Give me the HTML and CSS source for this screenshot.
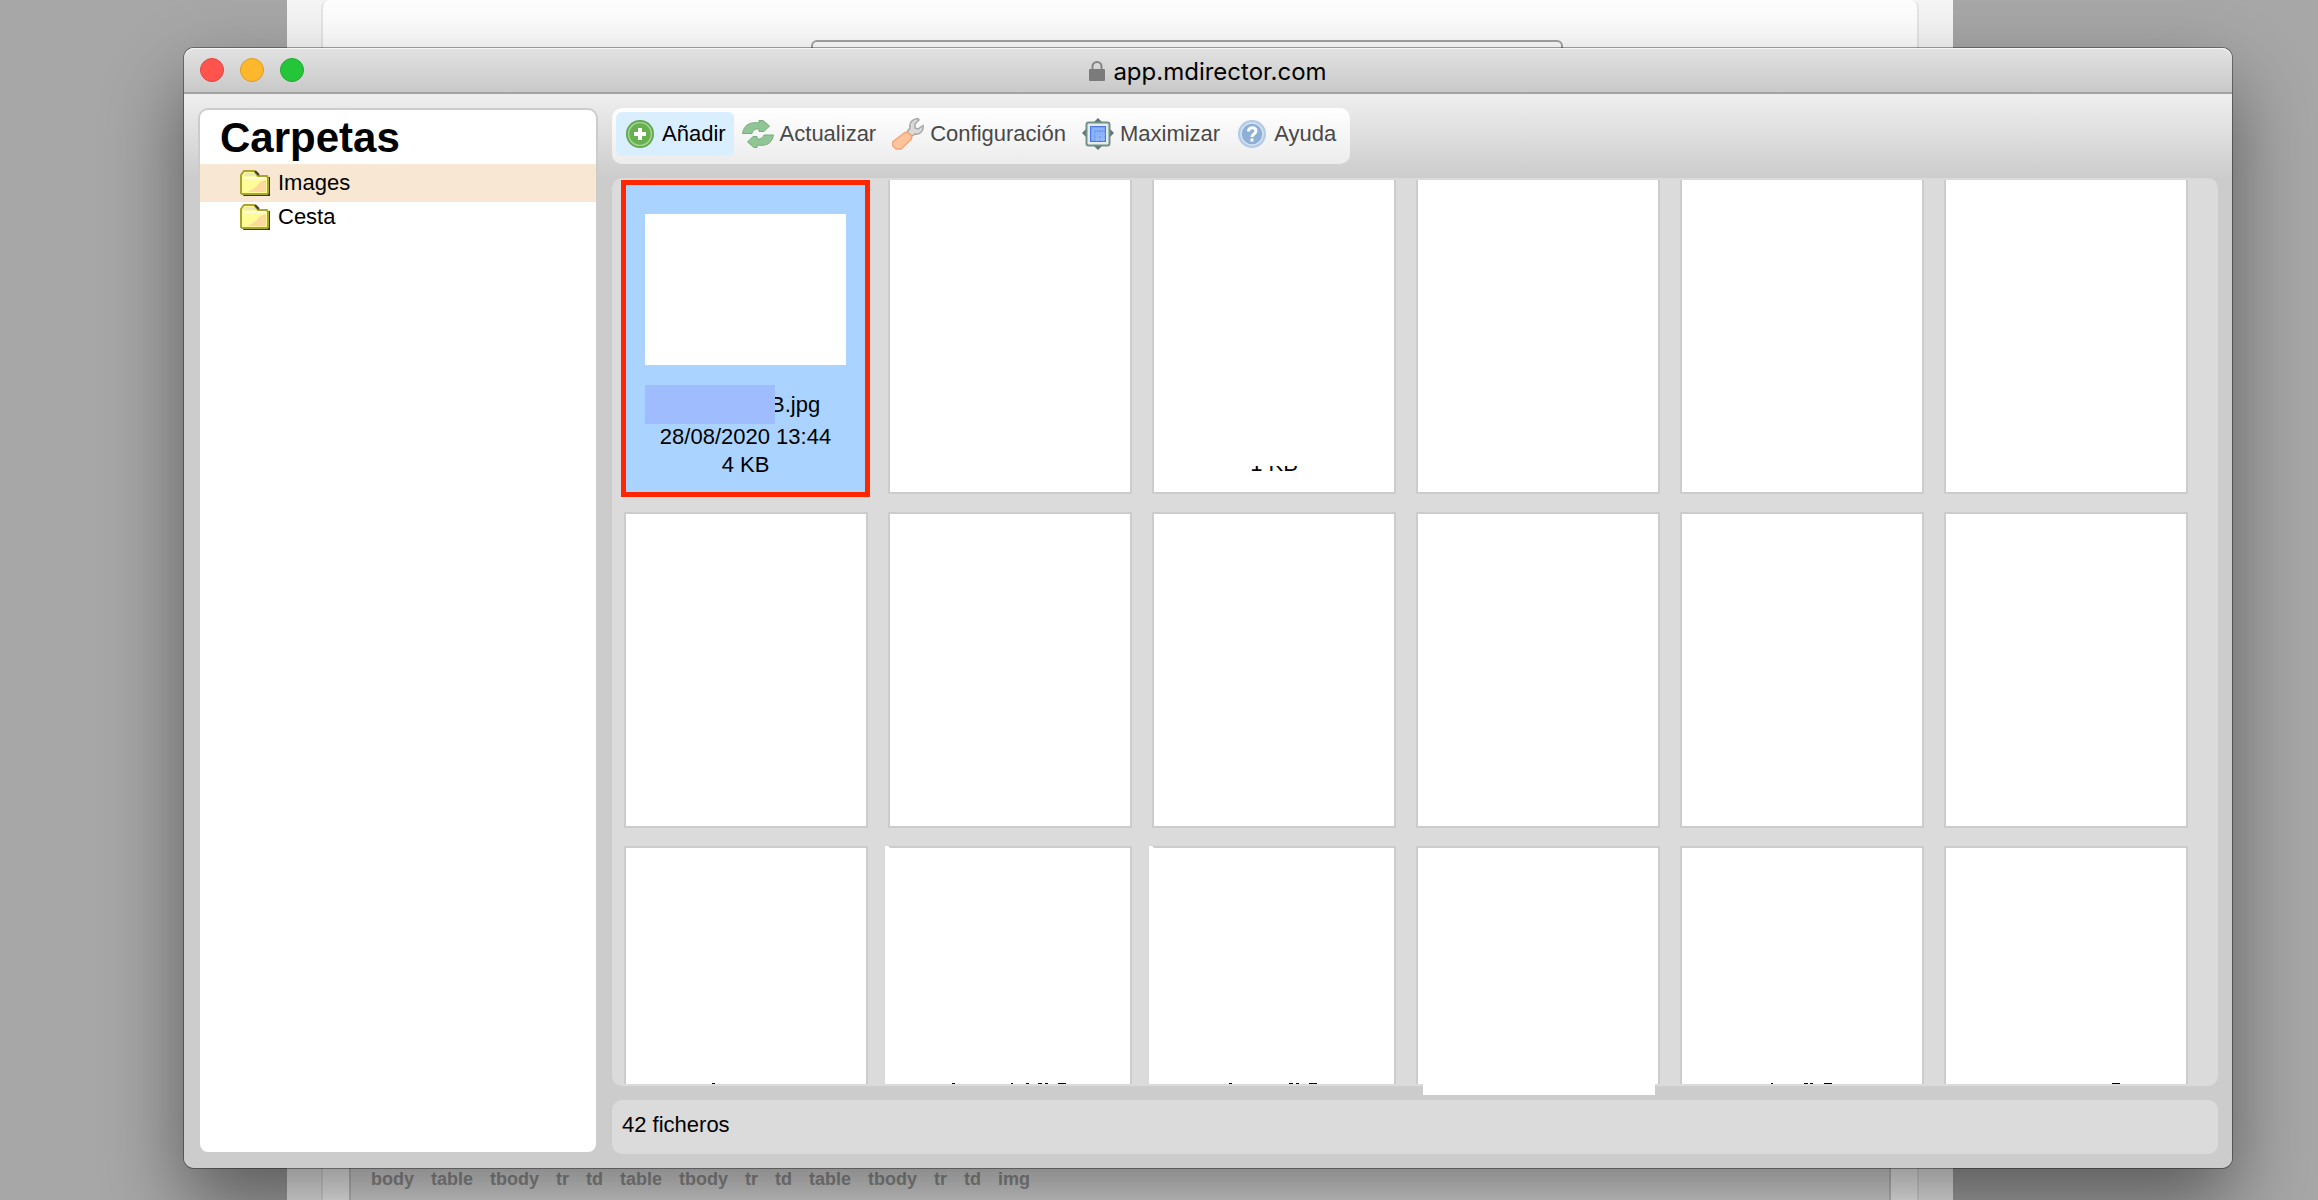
FILE: index.html
```
<!DOCTYPE html>
<html lang="es">
<head>
    <meta charset="UTF-8">
    <meta name="viewport" content="width=device-width, initial-scale=1.0">
    <title>app.mdirector.com</title>
    <link rel="stylesheet" href="styles.css">
</head>
<body>
<div class="desktop">

    <!-- editor behind the window -->
    <div class="page">
        <div class="card">
            <input type="text" class="field" aria-label="Asunto">
            <nav class="path">
                <a href="#">body</a>
                <a href="#">table</a>
                <a href="#">tbody</a>
                <a href="#">tr</a>
                <a href="#">td</a>
                <a href="#">table</a>
                <a href="#">tbody</a>
                <a href="#">tr</a>
                <a href="#">td</a>
                <a href="#">table</a>
                <a href="#">tbody</a>
                <a href="#">tr</a>
                <a href="#">td</a>
                <a href="#">img</a>
            </nav>
        </div>
    </div>

    <div class="window">
        <div class="titlebar">
            <div class="lights">
                <button class="light red" aria-label="Cerrar"></button>
                <button class="light yellow" aria-label="Minimizar"></button>
                <button class="light green" aria-label="Ampliar"></button>
            </div>
            <div class="title">
                <svg width="16" height="20" viewBox="0 0 16 20">
                    <path d="M3.5 9V5.500a4.500 4.500 0 0 1 9 0V9" fill="none" stroke="#858585" stroke-width="2"/>
                    <rect y="8" width="16" height="12" rx="1" fill="#7b7b7b"/>
                </svg>
                <span>app.mdirector.com</span>
            </div>
        </div>

        <div class="content">
            <div class="sidebar">
                <h1>Carpetas</h1>
                <ul class="tree">
                    <li class="current">
                        <svg width="30" height="26" viewBox="0 0 30 26"><use href="#folder"/></svg>
                        <a href="#">Images</a>
                    </li>
                    <li>
                        <svg width="30" height="26" viewBox="0 0 30 26"><use href="#folder"/></svg>
                        <a href="#">Cesta</a>
                    </li>
                </ul>
            </div>

            <div class="main">
                <div class="toolbar">
                    <button class="active">
                        <svg width="32" height="32" viewBox="0 0 32 32">
                            <circle cx="16" cy="16" r="14" fill="#5fa64c"/>
                            <circle cx="16" cy="16" r="11.500" fill="#67b04f" stroke="#a5d492" stroke-width="1.500"/>
                            <path d="M16 10v12M10 16h12" stroke="#fff" stroke-width="4"/>
                        </svg>
                        Añadir
                    </button>
                    <button>
                        <svg width="32" height="32" viewBox="0 0 32 32" fill="#92c596" stroke="#75ad7b">
                            <path d="M.5 15.500C2 7 8 3.500 17 5V2.500h4L27.500 8 22 13.500H17V11c-4-.5-6 1-7 4.500z"/>
                            <path d="M31.500 17C30 25.500 24 28.500 15 27v2.500h-3L5.500 24 11 18.500h4V21c4 .5 6-1 7-4z"/>
                        </svg>
                        Actualizar
                    </button>
                    <button>
                        <svg width="32" height="32" viewBox="0 0 32 32">
                            <path d="M15 14L18 10C17 5 20 1 26 .5L27 2 23 6v4l3 1 5-3.500c1 5-3 9.500-8 8.500L20 18z" fill="#d9d9d9" stroke="#a8a8a8" stroke-width="1.500"/>
                            <path d="M13 14.500h3l3.500 3.500v3L9 31H4L.5 27.500V24z" fill="#ffc49c" stroke="#f3a677" stroke-width="1.500"/>
                        </svg>
                        Configuración
                    </button>
                    <button>
                        <svg width="32" height="32" viewBox="0 0 32 32">
                            <path d="M16 0l4 4h-8zM16 32l4-4h-8zM0 15l4-4v8zM32 15l-4-4v8z" fill="#5d7974"/>
                            <rect x="4.500" y="4.500" width="23" height="23" rx="2" fill="#e6eceb" stroke="#71908a" stroke-width="2"/>
                            <rect x="8.500" y="8.500" width="15" height="15" fill="#78a4f5" stroke="#4a7ae8"/>
                            <path d="M11 22V11h11M14 15h3v3h-3zM19 15h3v3h-3zM14 20h3v2h-3zM19 20h3v2h-3z" fill="none" stroke="#a5c3fa"/>
                        </svg>
                        Maximizar
                    </button>
                    <button>
                        <svg width="32" height="32" viewBox="0 0 32 32">
                            <circle cx="16" cy="16" r="14" fill="#b3cbe6"/>
                            <circle cx="16" cy="16" r="11" fill="#8eafd8" stroke="#d5e3f3" stroke-width="1.500"/>
                            <path d="M12.500 13.500c0-5 7.500-5 7.500-.5 0 3-4 3-4 6M16 20.500v3" fill="none" stroke="#fff" stroke-width="3"/>
                        </svg>
                        Ayuda
                    </button>
                </div>

                <div class="files">
                    <div class="grid">
                        <div class="tile selected">
                            <div class="preview"></div>
                            <div class="name"><span class="cover"></span><span class="text">B.jpg</span></div>
                            <div class="info">28/08/2020 13:44</div>
                            <div class="info">4 KB</div>
                        </div>
                        <div class="tile"></div>
                        <div class="tile last-line">
                            <div class="info cut">1 KB</div>
                        </div>
                        <div class="tile"></div>
                        <div class="tile"></div>
                        <div class="tile"></div>

                        <div class="tile"></div>
                        <div class="tile"></div>
                        <div class="tile"></div>
                        <div class="tile"></div>
                        <div class="tile"></div>
                        <div class="tile"></div>

                        <!-- only the tops of the names show at the lower edge -->
                        <div class="tile">
                            <svg class="tops" viewBox="0 0 240 1"><path d="M86 0h3v1h-3z"/></svg>
                        </div>
                        <div class="tile wide">
                            <svg class="tops" viewBox="0 0 240 1"><path d="M62 0h3v1h-3zM121 0h2v1h-2zM136 0h3v1h-3zM148 0h4v1h-4zM155 0h3v1h-3zM168 0h8v1h-8z"/></svg>
                        </div>
                        <div class="tile wide">
                            <svg class="tops" viewBox="0 0 240 1"><path d="M75 0h3v1h-3zM135 0h4v1h-4zM142 0h3v1h-3zM155 0h8v1h-8z"/></svg>
                        </div>
                        <div class="tile"></div>
                        <div class="tile">
                            <svg class="tops" viewBox="0 0 240 1"><path d="M89 0h2v1h-2zM122 0h4v1h-4zM128 0h3v1h-3zM142 0h8v1h-8z"/></svg>
                        </div>
                        <div class="tile">
                            <svg class="tops" viewBox="0 0 240 1"><path d="M166 0h8v1h-8z"/></svg>
                        </div>
                    </div>
                    <div class="patch"></div>
                </div>

                <div class="status">42 ficheros</div>
            </div>
        </div>
    </div>
</div>

<svg width="0" height="0" class="defs">
    <symbol id="folder" viewBox="0 0 30 26">
        <path d="M4 24h24V7h2v19H3z" fill="#3a3a2a"/>
        <path d="M1 23V5l3-4h10l4 5h9l1 2v15l-1 1H2z" fill="#fffb96" stroke="#a9a42c" stroke-width="2"/>
        <path d="M5 3h9l2 3H4z" fill="#e9e6c0"/>
        <path d="M15 1l4 4" stroke="#3a3a2a" stroke-width="2"/>
        <path d="M3 8h23" stroke="#fffde0" stroke-width="2"/>
        <path d="M26 10v12H8l8-5 4-5z" fill="#fdd9a0"/>
    </symbol>
</svg>
</body>
</html>
```
FILE: styles.css
```
*{
    box-sizing: border-box;
}
body{
    margin: 0;
    font-family: "Liberation Sans", Arial, sans-serif;
    font-size: 22px;
    color: #000;
}
a{
    color: inherit;
    text-decoration: none;
}
button{
    border: 0;
    padding: 0;
    background: none;
    font: inherit;
    color: inherit;
}
.defs{
    display: none;
}
.desktop{
    display: grid;
    grid-template-columns: minmax(0, 1fr);
    grid-template-rows: minmax(0, 1fr);
    height: 100vh;
    overflow: hidden;
    background: #a7a7a7;
}

/* editor page */
.page{
    grid-area: 1 / 1;
    margin: 0 365px 0 287px;
    padding: 0 34px;
    background: #f5f5f5;
}
.card{
    display: flex;
    flex-direction: column;
    justify-content: space-between;
    height: 100%;
    padding: 0 26px;
    border: 2px solid #e6e6e6;
    border-width: 0 2px;
    border-radius: 8px 8px 0 0;
    background: #fefefe;
}
.field{
    width: 752px;
    height: 44px;
    margin: 40px 0 0 462px;
    border: 2px solid #a5a5a5;
    border-radius: 6px;
    background: #fff;
}
.path{
    display: flex;
    gap: 17px;
    height: 40px;
    padding: 0 20px;
    border: 2px solid #c9c9c9;
    border-width: 0 2px;
    background: #e3e3e3;
    color: #979797;
    font-size: 18px;
    font-weight: bold;
    line-height: 38px;
}

/* window */
.window{
    grid-area: 1 / 1;
    display: flex;
    flex-direction: column;
    margin: 48px 86px 32px 184px;
    border-radius: 10px;
    background: #ccc;
    box-shadow: 0 0 0 1px rgba(0,0,0,.35), 0 36px 80px rgba(0,0,0,.46);
    position: relative;
}
.titlebar{
    display: grid;
    grid-template-columns: 1fr auto 1fr;
    align-items: center;
    height: 46px;
    padding: 0 16px;
    border-bottom: 2px solid #a3a3a3;
    border-radius: 10px 10px 0 0;
    background: linear-gradient(#e2e2e2, #c9c9c9);
    box-shadow: inset 0 1px 0 #f6f6f6;
}
.lights{
    display: flex;
    gap: 16px;
}
.light{
    width: 24px;
    height: 24px;
    border: 1px solid;
    border-radius: 50%;
}
.red{
    background: #ff544d;
    border-color: #e2453f;
}
.yellow{
    background: #ffb72b;
    border-color: #df9b22;
}
.green{
    background: #25c53a;
    border-color: #1dac2c;
}
.title{
    display: flex;
    align-items: center;
    gap: 8px;
    padding-top: 2px;
    font-family: Inter, "Liberation Sans", sans-serif;
    font-size: 24px;
}
.content{
    flex: 1;
    min-height: 0;
    display: grid;
    grid-template-columns: 400px minmax(0, 1fr);
    grid-template-rows: minmax(0, 1fr);
    gap: 14px;
    padding: 14px;
    border-radius: 0 0 10px 10px;
    background: linear-gradient(#efefef, #ccc 84px);
}
.sidebar{
    border: 2px solid #ccc;
    border-radius: 10px;
    background: #fff;
}
.sidebar h1{
    height: 54px;
    margin: 0;
    padding-left: 20px;
    font-size: 42px;
    line-height: 56px;
}
.tree{
    margin: 0;
    padding: 0;
    list-style: none;
}
.tree li{
    display: flex;
    align-items: center;
    gap: 8px;
    padding-left: 40px;
    line-height: 34px;
}
.tree .current{
    padding-top: 2px;
    padding-bottom: 2px;
    margin-bottom: -2px;
    background: #f8e7d2;
}
.main{
    display: flex;
    flex-direction: column;
    gap: 14px;
    min-height: 0;
}
.toolbar{
    align-self: flex-start;
    display: flex;
    padding: 4px 6px 8px 4px;
    border-radius: 10px;
    background: linear-gradient(#fff, #ececec);
    color: #484848;
}
.toolbar button{
    display: flex;
    align-items: center;
    gap: 6px;
    height: 44px;
    padding: 0 8px;
    border-radius: 6px;
    line-height: 44px;
}
.toolbar .active{
    background: #d9eeff;
    color: #000;
}

/* files */
.files{
    flex: 1;
    min-height: 0;
    padding: 2px 0;
    border-radius: 10px;
    background: #dbdbdb;
    position: relative;
}
.grid{
    display: grid;
    grid-template-columns: repeat(auto-fill, 244px);
    grid-auto-rows: 316px;
    gap: 18px 20px;
    align-content: start;
    height: 100%;
    padding: 0 12px;
    overflow: hidden;
}
.tile{
    position: relative;
    top: -2px;
    border: 2px solid #ccc;
    background: #fff;
    text-align: center;
}
.selected{
    padding: 34px 20px 0 19px;
    background: #aad4ff;
}
.selected::after{
    content: "";
    position: absolute;
    inset: 0 -4px -5px -5px;
    border: 5px solid #ff2600;
}
.preview{
    height: 151px;
    background: #fff;
}
.name{
    display: flex;
    height: 39px;
    margin: 20px 0 -1px;
    line-height: 40px;
}
.cover{
    width: 130px;
    background: #9fbcff;
    z-index: 1;
}
.name .text{
    margin-left: -5px;
}
.info{
    line-height: 28px;
}
.last-line{
    padding-top: 270px;
}
.cut{
    clip-path: inset(16px 0 0);
}
.tops{
    display: block;
    width: 240px;
    height: 1px;
    margin-top: 235px;
}
.wide{
    border-left-color: #fff;
    box-shadow: -3px 0 0 #fff;
}
.patch{
    position: absolute;
    left: 811px;
    bottom: -9px;
    width: 232px;
    height: 20px;
    background: #fff;
}
.status{
    height: 54px;
    padding-left: 10px;
    border-radius: 10px;
    background: #dbdbdb;
    line-height: 50px;
}
```
